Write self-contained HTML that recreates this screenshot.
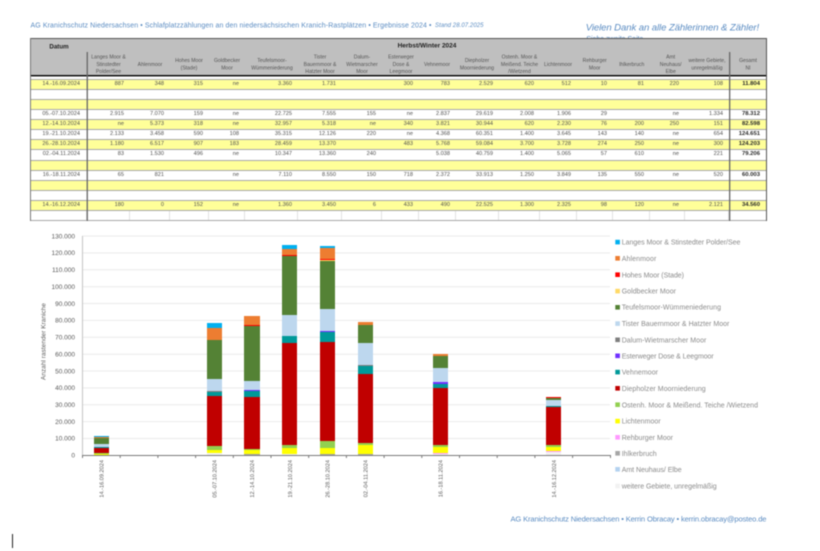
<!DOCTYPE html>
<html lang="de"><head><meta charset="utf-8"><title>Schlafplatzzählungen 2024</title>
<style>
html,body{margin:0;padding:0;background:#fff}
#p{position:relative;width:820px;height:551px;overflow:hidden;background:#fff;font-family:"Liberation Sans",sans-serif;filter:blur(.45px)}
svg{position:absolute;left:0;top:0}
.r{position:absolute;left:30px;width:736px;height:10.1px;box-sizing:border-box;border-top:1px solid #a8a8a8;display:flex;background:#fff;font-size:5.6px;line-height:9px;color:#505050}
.y{background:#ffff99}
.r span{display:block;flex:none;box-sizing:border-box;text-align:right;padding-right:6px;height:9px;white-space:nowrap}
.r span:nth-child(1){width:57px;padding-right:7px}
.r span:nth-child(2){width:43px}.r span:nth-child(3){width:40px}.r span:nth-child(4){width:39px}
.r span:nth-child(5){width:36px}.r span:nth-child(6){width:53px}.r span:nth-child(7){width:44px}
.r span:nth-child(8){width:40px}.r span:nth-child(9){width:37px}.r span:nth-child(10){width:37px}
.r span:nth-child(11){width:43px}.r span:nth-child(12){width:41px}.r span:nth-child(13){width:37px}
.r span:nth-child(14){width:36px}.r span:nth-child(15){width:37px}.r span:nth-child(16){width:35px}
.r span:nth-child(17){width:44px}.r span:nth-child(18){width:37px;font-weight:bold;font-size:5.9px;color:#2a2a2a}
.l span{border-right:1px solid #e2e2e2}
.bar{position:absolute;bottom:95.7px;width:15.3px;display:flex;flex-direction:column-reverse}
.bar i{display:block;flex:none;height:calc(var(--v)*.001687px)}
.a{background:#00b0f0}.b{background:#ed7d31}.c{background:#ff0000}.d{background:#ffd966}
.e{background:#548235}.f{background:#bdd7ee}.g{background:#7f7f7f}.h{background:#7030ff}
.j{background:#009999}.k{background:#c00000}.m{background:#92d050}.n{background:#ffff00}
.o{background:#ff99ff}.q{background:#a6a6a6}.s{background:#b4d2f0}.t{background:#f2f2f2}
</style></head><body>
<div id="p">

<svg width="820" height="551" viewBox="0 0 820 551" font-family="'Liberation Sans',sans-serif">
<g fill="#5b8cc2">
<text x="30.5" y="27.4" font-size="7" textLength="401" lengthAdjust="spacing">AG Kranichschutz Niedersachsen • Schlafplatzzählungen an den niedersächsischen Kranich-Rastplätzen • Ergebnisse 2024 •</text>
<text x="435" y="27.2" font-size="6" font-style="italic" textLength="48.5" lengthAdjust="spacing">Stand 28.07.2025</text>
<text x="585.7" y="30.5" font-size="9.6" font-style="italic" textLength="173.5" lengthAdjust="spacing">Vielen Dank an alle Zählerinnen &amp; Zähler!</text>
<text x="586" y="41" font-size="7" font-style="italic" textLength="57" lengthAdjust="spacing">Siehe zweite Seite</text>
<text x="510.5" y="521.3" font-size="7.6" textLength="256" lengthAdjust="spacing">AG Kranichschutz Niedersachsen • Kerrin Obracay • kerrin.obracay@posteo.de</text>
</g>
<rect x="30" y="38" width="736.5" height="38" fill="#bfbfbf"/>
<rect x="30" y="38" width="736.5" height="1" fill="#555"/>
<rect x="30" y="75" width="736.5" height="1.4" fill="#000"/>
<rect x="12" y="534" width="1" height="14" fill="#222"/>
</svg>

<div class="r y" style="top:78.7px"><span>14.-16.09.2024</span><span>887</span><span>348</span><span>315</span><span>ne</span><span>3.360</span><span>1.731</span><span></span><span>300</span><span>783</span><span>2.529</span><span>620</span><span>512</span><span>10</span><span>81</span><span>220</span><span>108</span><span>11.804</span></div>
<div class="r" style="top:88.8px"></div>
<div class="r y" style="top:98.9px"></div>
<div class="r" style="top:109px"><span>05.-07.10.2024</span><span>2.915</span><span>7.070</span><span>159</span><span>ne</span><span>22.725</span><span>7.555</span><span>155</span><span>ne</span><span>2.837</span><span>29.619</span><span>2.008</span><span>1.906</span><span>29</span><span></span><span>ne</span><span>1.334</span><span>78.312</span></div>
<div class="r y" style="top:119.1px"><span>12.-14.10.2024</span><span>ne</span><span>5.373</span><span>318</span><span>ne</span><span>32.957</span><span>5.318</span><span>ne</span><span>340</span><span>3.821</span><span>30.944</span><span>620</span><span>2.230</span><span>76</span><span>200</span><span>250</span><span>151</span><span>82.598</span></div>
<div class="r" style="top:129.2px"><span>19.-21.10.2024</span><span>2.133</span><span>3.458</span><span>590</span><span>108</span><span>35.315</span><span>12.126</span><span>220</span><span>ne</span><span>4.368</span><span>60.351</span><span>1.400</span><span>3.645</span><span>143</span><span>140</span><span>ne</span><span>654</span><span>124.651</span></div>
<div class="r y" style="top:139.3px"><span>26.-28.10.2024</span><span>1.180</span><span>6.517</span><span>907</span><span>183</span><span>28.459</span><span>13.370</span><span></span><span>483</span><span>5.768</span><span>59.084</span><span>3.700</span><span>3.728</span><span>274</span><span>250</span><span>ne</span><span>300</span><span>124.203</span></div>
<div class="r" style="top:149.4px"><span>02.-04.11.2024</span><span>83</span><span>1.530</span><span>496</span><span>ne</span><span>10.347</span><span>13.360</span><span>240</span><span></span><span>5.038</span><span>40.759</span><span>1.400</span><span>5.065</span><span>57</span><span>610</span><span>ne</span><span>221</span><span>79.206</span></div>
<div class="r y" style="top:159.5px"></div>
<div class="r" style="top:169.6px"><span>16.-18.11.2024</span><span>65</span><span>821</span><span></span><span>ne</span><span>7.110</span><span>8.550</span><span>150</span><span>718</span><span>2.372</span><span>33.913</span><span>1.250</span><span>3.849</span><span>135</span><span>550</span><span>ne</span><span>520</span><span>60.003</span></div>
<div class="r y" style="top:179.7px"></div>
<div class="r" style="top:189.8px"></div>
<div class="r y" style="top:199.9px"><span>14.-16.12.2024</span><span>180</span><span>0</span><span>152</span><span>ne</span><span>1.360</span><span>3.450</span><span>6</span><span>433</span><span>490</span><span>22.525</span><span>1.300</span><span>2.325</span><span>98</span><span>120</span><span>ne</span><span>2.121</span><span>34.560</span></div>
<div class="r l" style="top:210px;height:11px;border-bottom:1px solid #a8a8a8"><span></span><span></span><span></span><span></span><span></span><span></span><span></span><span></span><span></span><span></span><span></span><span></span><span></span><span></span><span></span><span></span><span></span><span style="border:0"></span></div>

<svg width="820" height="551" viewBox="0 0 820 551" font-family="'Liberation Sans',sans-serif">
<rect x="30" y="38" width="1" height="183" fill="#777"/>
<rect x="766" y="38" width="1" height="183" fill="#555"/>
<rect x="86.6" y="52" width="1.3" height="169" fill="#666"/>
<rect x="729" y="52" width="1.3" height="169" fill="#666"/>
<g fill="#222" font-weight="bold" text-anchor="middle">
<text x="59" y="48.3" font-size="6.2">Datum</text>
<text x="427" y="47.5" font-size="6.5">Herbst/Winter 2024</text>
</g>
<g fill="#555" font-size="5.1" text-anchor="middle">
<text x="108.5" y="58.6">Langes Moor &amp;</text><text x="108.5" y="65.9">Stinstedter</text><text x="108.5" y="73.2">Polder/See</text>
<text x="150" y="65.9">Ahlenmoor</text>
<text x="189" y="61.9">Hohes Moor</text><text x="189" y="69.5">(Stade)</text>
<text x="227" y="61.9">Goldbecker</text><text x="227" y="69.5">Moor</text>
<text x="272" y="61.9">Teufelsmoor-</text><text x="272" y="69.5">Wümmeniederung</text>
<text x="320" y="58.6">Tister</text><text x="320" y="65.9">Bauernmoor &amp;</text><text x="320" y="73.2">Hatzter Moor</text>
<text x="362" y="58.6">Dalum-</text><text x="362" y="65.9">Wietmarscher</text><text x="362" y="73.2">Moor</text>
<text x="401" y="58.6">Esterweger</text><text x="401" y="65.9">Dose &amp;</text><text x="401" y="73.2">Leegmoor</text>
<text x="437" y="65.9">Vehnemoor</text>
<text x="477" y="61.9">Diepholzer</text><text x="477" y="69.5">Moorniederung</text>
<text x="519.5" y="58.6">Ostenh. Moor &amp;</text><text x="519.5" y="65.9">Meißend. Teiche</text><text x="519.5" y="73.2">/Wietzend</text>
<text x="558" y="65.9">Lichtenmoor</text>
<text x="594.7" y="61.9">Rehburger</text><text x="594.7" y="69.5">Moor</text>
<text x="631.7" y="65.9">Ihlkerbruch</text>
<text x="670.7" y="58.6">Amt</text><text x="670.7" y="65.9">Neuhaus/</text><text x="670.7" y="73.2">Elbe</text>
<text x="707" y="61.9">weitere Gebiete,</text><text x="707" y="69.5">unregelmäßig</text>
<text x="748" y="61.9">Gesamt</text><text x="748" y="69.5">NI</text>
</g>
<g fill="#ebebeb">
<rect x="82" y="235.6" width="528" height="1"/><rect x="82" y="252.4" width="528" height="1"/><rect x="82" y="269.3" width="528" height="1"/><rect x="82" y="286.2" width="528" height="1"/><rect x="82" y="303" width="528" height="1"/><rect x="82" y="319.9" width="528" height="1"/><rect x="82" y="336.8" width="528" height="1"/><rect x="82" y="353.7" width="528" height="1"/><rect x="82" y="370.5" width="528" height="1"/><rect x="82" y="387.4" width="528" height="1"/><rect x="82" y="404.3" width="528" height="1"/><rect x="82" y="421.1" width="528" height="1"/><rect x="82" y="438" width="528" height="1"/>
</g>
<rect x="82" y="236" width="1" height="219" fill="#c4c4c4"/>
<g fill="#595959" font-size="6.5" text-anchor="end">
<text x="75" y="238.3">130.000</text><text x="75" y="255.2">120.000</text><text x="75" y="272">110.000</text><text x="75" y="288.9">100.000</text><text x="75" y="305.8">90.000</text><text x="75" y="322.6">80.000</text><text x="75" y="339.5">70.000</text><text x="75" y="356.4">60.000</text><text x="75" y="373.3">50.000</text><text x="75" y="390.1">40.000</text><text x="75" y="407">30.000</text><text x="75" y="423.9">20.000</text><text x="75" y="440.7">10.000</text><text x="75" y="457.6">0</text>
</g>
<text transform="translate(45.3,341.5) rotate(-90)" fill="#595959" font-size="6.4" text-anchor="middle" textLength="77" lengthAdjust="spacing">Anzahl rastender Kraniche</text>
<g fill="#595959" font-size="5.6" text-anchor="end">
<text transform="translate(103.7,460) rotate(-90)">14.-16.09.2024</text>
<text transform="translate(216.5,460) rotate(-90)">05.-07.10.2024</text>
<text transform="translate(254.2,460) rotate(-90)">12.-14.10.2024</text>
<text transform="translate(291.9,460) rotate(-90)">19.-21.10.2024</text>
<text transform="translate(329.6,460) rotate(-90)">26.-28.10.2024</text>
<text transform="translate(367.3,460) rotate(-90)">02.-04.11.2024</text>
<text transform="translate(442.7,460) rotate(-90)">16.-18.11.2024</text>
<text transform="translate(555.8,460) rotate(-90)">14.-16.12.2024</text>
</g>
<g>
<rect x="615.3" y="239.8" width="4.6" height="4.6" fill="#00b0f0"/><rect x="615.3" y="256" width="4.6" height="4.6" fill="#ed7d31"/><rect x="615.3" y="272.4" width="4.6" height="4.6" fill="#ff0000"/><rect x="615.3" y="288.8" width="4.6" height="4.6" fill="#ffd966"/><rect x="615.3" y="305" width="4.6" height="4.6" fill="#548235"/><rect x="615.3" y="321.3" width="4.6" height="4.6" fill="#bdd7ee"/><rect x="615.3" y="337.5" width="4.6" height="4.6" fill="#7f7f7f"/><rect x="615.3" y="353.5" width="4.6" height="4.6" fill="#7030ff"/><rect x="615.3" y="369.8" width="4.6" height="4.6" fill="#009999"/><rect x="615.3" y="386" width="4.6" height="4.6" fill="#c00000"/><rect x="615.3" y="402.4" width="4.6" height="4.6" fill="#92d050"/><rect x="615.3" y="418.8" width="4.6" height="4.6" fill="#ffff00"/><rect x="615.3" y="435" width="4.6" height="4.6" fill="#ff99ff"/><rect x="615.3" y="451" width="4.6" height="4.6" fill="#a6a6a6"/><rect x="615.3" y="467" width="4.6" height="4.6" fill="#b4d2f0"/><rect x="615.3" y="483.7" width="4.6" height="4.6" fill="#f2f2f2"/>
</g>
<g fill="#8a8a8a" font-size="7" lengthAdjust="spacing">
<text x="621.7" y="244.6" textLength="118.7">Langes Moor &amp; Stinstedter Polder/See</text>
<text x="621.7" y="260.9" textLength="34.7">Ahlenmoor</text>
<text x="621.7" y="277.3" textLength="62.3">Hohes Moor (Stade)</text>
<text x="621.7" y="293.6" textLength="54.3">Goldbecker Moor</text>
<text x="621.7" y="309.6" textLength="99.3">Teufelsmoor-Wümmeniederung</text>
<text x="621.7" y="326.1" textLength="107.7">Tister Bauernmoor &amp; Hatzter Moor</text>
<text x="621.7" y="342.3" textLength="84.7">Dalum-Wietmarscher Moor</text>
<text x="621.7" y="358.3" textLength="92">Esterweger Dose &amp; Leegmoor</text>
<text x="621.7" y="374.6" textLength="36.3">Vehnemoor</text>
<text x="621.7" y="390.9" textLength="84">Diepholzer Moorniederung</text>
<text x="621.7" y="407.3" textLength="136.3">Ostenh. Moor &amp; Meißend. Teiche /Wietzend</text>
<text x="621.7" y="423.6" textLength="39">Lichtenmoor</text>
<text x="621.7" y="439.9" textLength="51.3">Rehburger Moor</text>
<text x="621.7" y="455.9" textLength="35">Ihlkerbruch</text>
<text x="621.7" y="471.9" textLength="60">Amt Neuhaus/ Elbe</text>
<text x="621.7" y="488.6" textLength="95">weitere Gebiete, unregelmäßig</text>
</g>
</svg>

<div class="bar" style="left:93.7px"><i class="t" style="--v:108"></i><i class="s" style="--v:220"></i><i class="q" style="--v:81"></i><i class="o" style="--v:10"></i><i class="n" style="--v:512"></i><i class="m" style="--v:620"></i><i class="k" style="--v:2529"></i><i class="j" style="--v:783"></i><i class="h" style="--v:300"></i><i class="f" style="--v:1731"></i><i class="e" style="--v:3360"></i><i class="c" style="--v:315"></i><i class="b" style="--v:348"></i><i class="a" style="--v:887"></i></div>
<div class="bar" style="left:206.7px"><i class="t" style="--v:1334"></i><i class="o" style="--v:29"></i><i class="n" style="--v:1906"></i><i class="m" style="--v:2008"></i><i class="k" style="--v:29619"></i><i class="j" style="--v:2837"></i><i class="g" style="--v:155"></i><i class="f" style="--v:7555"></i><i class="e" style="--v:22725"></i><i class="c" style="--v:159"></i><i class="b" style="--v:7070"></i><i class="a" style="--v:2915"></i></div>
<div class="bar" style="left:244.4px"><i class="t" style="--v:151"></i><i class="s" style="--v:250"></i><i class="q" style="--v:200"></i><i class="o" style="--v:76"></i><i class="n" style="--v:2230"></i><i class="m" style="--v:620"></i><i class="k" style="--v:30944"></i><i class="j" style="--v:3821"></i><i class="h" style="--v:340"></i><i class="f" style="--v:5318"></i><i class="e" style="--v:32957"></i><i class="c" style="--v:318"></i><i class="b" style="--v:5373"></i></div>
<div class="bar" style="left:282px"><i class="t" style="--v:654"></i><i class="q" style="--v:140"></i><i class="o" style="--v:143"></i><i class="n" style="--v:3645"></i><i class="m" style="--v:1400"></i><i class="k" style="--v:60351"></i><i class="j" style="--v:4368"></i><i class="g" style="--v:220"></i><i class="f" style="--v:12126"></i><i class="e" style="--v:35315"></i><i class="d" style="--v:108"></i><i class="c" style="--v:590"></i><i class="b" style="--v:3458"></i><i class="a" style="--v:2133"></i></div>
<div class="bar" style="left:319.7px"><i class="t" style="--v:300"></i><i class="q" style="--v:250"></i><i class="o" style="--v:274"></i><i class="n" style="--v:3728"></i><i class="m" style="--v:3700"></i><i class="k" style="--v:59084"></i><i class="j" style="--v:5768"></i><i class="h" style="--v:483"></i><i class="f" style="--v:13370"></i><i class="e" style="--v:28459"></i><i class="d" style="--v:183"></i><i class="c" style="--v:907"></i><i class="b" style="--v:6517"></i><i class="a" style="--v:1180"></i></div>
<div class="bar" style="left:357.7px"><i class="t" style="--v:221"></i><i class="q" style="--v:610"></i><i class="o" style="--v:57"></i><i class="n" style="--v:5065"></i><i class="m" style="--v:1400"></i><i class="k" style="--v:40759"></i><i class="j" style="--v:5038"></i><i class="g" style="--v:240"></i><i class="f" style="--v:13360"></i><i class="e" style="--v:10347"></i><i class="c" style="--v:496"></i><i class="b" style="--v:1530"></i><i class="a" style="--v:83"></i></div>
<div class="bar" style="left:433.2px"><i class="t" style="--v:520"></i><i class="q" style="--v:550"></i><i class="o" style="--v:135"></i><i class="n" style="--v:3849"></i><i class="m" style="--v:1250"></i><i class="k" style="--v:33913"></i><i class="j" style="--v:2372"></i><i class="h" style="--v:718"></i><i class="g" style="--v:150"></i><i class="f" style="--v:8550"></i><i class="e" style="--v:7110"></i><i class="b" style="--v:821"></i><i class="a" style="--v:65"></i></div>
<div class="bar" style="left:546.1px"><i class="t" style="--v:2121"></i><i class="q" style="--v:120"></i><i class="o" style="--v:98"></i><i class="n" style="--v:2325"></i><i class="m" style="--v:1300"></i><i class="k" style="--v:22525"></i><i class="j" style="--v:490"></i><i class="h" style="--v:433"></i><i class="f" style="--v:3450"></i><i class="e" style="--v:1360"></i><i class="c" style="--v:152"></i><i class="a" style="--v:180"></i></div>

<svg width="820" height="551" viewBox="0 0 820 551">
<rect x="82" y="455" width="529" height="1" fill="#7a7a7a"/>
<g fill="#7a7a7a">
<rect x="82" y="455" width="1" height="3"/><rect x="119.7" y="455" width="1" height="3"/><rect x="157.4" y="455" width="1" height="3"/><rect x="195.1" y="455" width="1" height="3"/><rect x="232.8" y="455" width="1" height="3"/><rect x="270.5" y="455" width="1" height="3"/><rect x="308.2" y="455" width="1" height="3"/><rect x="345.9" y="455" width="1" height="3"/><rect x="383.6" y="455" width="1" height="3"/><rect x="421.3" y="455" width="1" height="3"/><rect x="459" y="455" width="1" height="3"/><rect x="496.7" y="455" width="1" height="3"/><rect x="534.4" y="455" width="1" height="3"/><rect x="572.1" y="455" width="1" height="3"/><rect x="610" y="455" width="1" height="3"/>
</g>
</svg>
</div>
</body></html>
